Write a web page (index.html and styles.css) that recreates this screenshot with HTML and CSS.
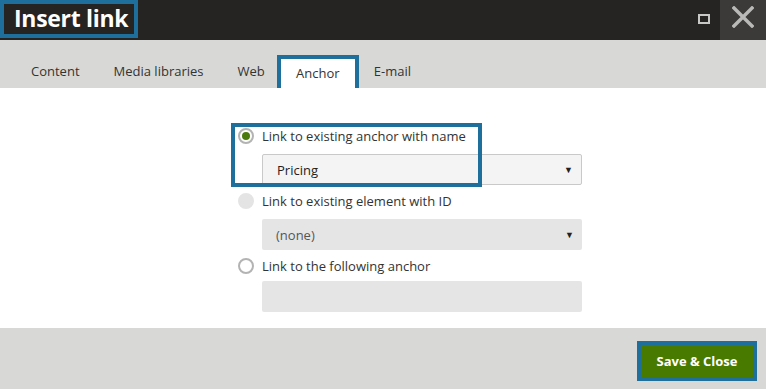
FILE: index.html
```html
<!DOCTYPE html>
<html>
<head>
<meta charset="utf-8">
<link rel="stylesheet" href="styles.css">
</head>
<body>
<div class="dialog">
  <header class="titlebar">
    <h1 class="title">Insert link</h1>
    <div class="win-btns">
      <span class="maximize"></span>
      <span class="close">
        <svg width="22" height="22" viewBox="0 0 22 22"><path d="M2 2L20 20M20 2L2 20" stroke="#b9b9b7" stroke-width="3.4" stroke-linecap="square"/></svg>
      </span>
    </div>
  </header>
  <nav class="tabs">
    <span class="tab">Content</span>
    <span class="tab">Media libraries</span>
    <span class="tab">Web</span>
    <span class="tab active">Anchor</span>
    <span class="tab">E-mail</span>
  </nav>
  <main class="content">
    <div class="form">
      <div class="focus-box"></div>
      <label class="option first"><span class="radio checked"></span>Link to existing anchor with name</label>
      <div class="field select">Pricing<span class="caret">&#9660;</span></div>
      <label class="option"><span class="radio disabled"></span>Link to existing element with ID</label>
      <div class="field select grey">(none)<span class="caret">&#9660;</span></div>
      <label class="option"><span class="radio"></span>Link to the following anchor</label>
      <div class="field grey last"></div>
    </div>
  </main>
  <footer class="footer">
    <span class="btn-wrap"><button class="btn">Save &amp; Close</button></span>
  </footer>
</div>
</body>
</html>
```
FILE: styles.css
```css
* { box-sizing: border-box; }
html, body { margin: 0; padding: 0; }
body {
  width: 766px;
  height: 389px;
  overflow: hidden;
  font-family: "Open Sans", "Noto Sans", sans-serif;
  color: #333;
  background: #fff;
}
.dialog { display: flex; flex-direction: column; height: 389px; }
.titlebar {
  height: 40px;
  background: #262422;
  display: flex;
  justify-content: space-between;
  align-items: flex-start;
}
.title {
  margin: 0;
  width: 138px;
  height: 38px;
  padding: 0 0 0 10px;
  border: 4px solid #1f6f9c;
  font-size: 23px;
  font-weight: 700;
  color: #fff;
  line-height: 29px;
  letter-spacing: -0.3px;
  white-space: nowrap;
}
.win-btns { display: flex; align-items: stretch; height: 40px; }
.maximize {
  align-self: center;
  width: 12px; height: 10px;
  border: 2.5px solid #c8c8c6;
  margin-right: 10px;
  margin-top: -3px;
}
.close {
  width: 46px;
  background: #3c3a38;
  display: flex; align-items: center; justify-content: center;
  padding-bottom: 6px;
}
.tabs {
  height: 48px;
  background: #d8d9d6;
  display: flex;
  align-items: flex-end;
  padding-left: 14px;
  font-size: 13px;
}
.tab {
  flex-shrink: 0;
  height: 33px;
  line-height: 33px;
  padding: 0 17px;
  color: #333;
}
.tab.active {
  background: #fff;
  border: 4px solid #1f6f9c;
  border-bottom: none;
  line-height: 29px;
  width: 82px;
  text-align: center;
  padding: 0;
  margin: 0 -2px 0 -5px;
}
.content {
  height: 240px;
  padding: 37px 0 0 238px;
}
.form {
  width: 344px;
  display: flex;
  flex-direction: column;
  font-size: 13px;
  position: relative;
}
.focus-box {
  position: absolute;
  left: -7px;
  top: -2px;
  width: 251px;
  height: 64px;
  border: 4px solid #1f6f9c;
  z-index: 2;
  pointer-events: none;
}
.option {
  display: flex;
  align-items: center;
  height: 22px;
  gap: 8px;
  color: #333;
  margin-top: 5px;
}
.option.first { margin-top: 0; }
.radio {
  width: 16px; height: 16px;
  border-radius: 50%;
  border: 2px solid #b3b3b3;
  background: #fff;
  display: inline-flex; align-items: center; justify-content: center;
}
.radio.checked::after {
  content: "";
  width: 8px; height: 8px;
  border-radius: 50%;
  background: #4a7a0c;
}
.radio.disabled { border-color: #e4e4e4; background: #e4e4e4; }
.field {
  height: 31px;
  margin: 7px 0 0 24px;
  width: 320px;
  border-radius: 2px;
  padding: 0 14px;
  display: flex;
  justify-content: space-between;
  align-items: center;
}
.field.last { margin-top: 4px; }
.select { background: #f4f4f4; border: 1px solid #c9c9c9; color: #222; }
.grey { background: #e5e5e5; border: none; color: #555; }
.caret { font-size: 9px; color: #222; margin-right: -6px; }
.footer {
  flex: 1;
  background: #d8d9d6;
  display: flex;
  justify-content: flex-end;
  align-items: flex-start;
  padding: 13px 9px 0 0;
}
.btn-wrap { display: inline-block; padding: 4px; background: #1f6f9c; }
.btn {
  display: block;
  font-family: inherit;
  font-size: 13px;
  font-weight: 700;
  color: #fff;
  background: #497a00;
  border: none;
  height: 32px;
  width: 112px;
  padding: 0;
}
```
